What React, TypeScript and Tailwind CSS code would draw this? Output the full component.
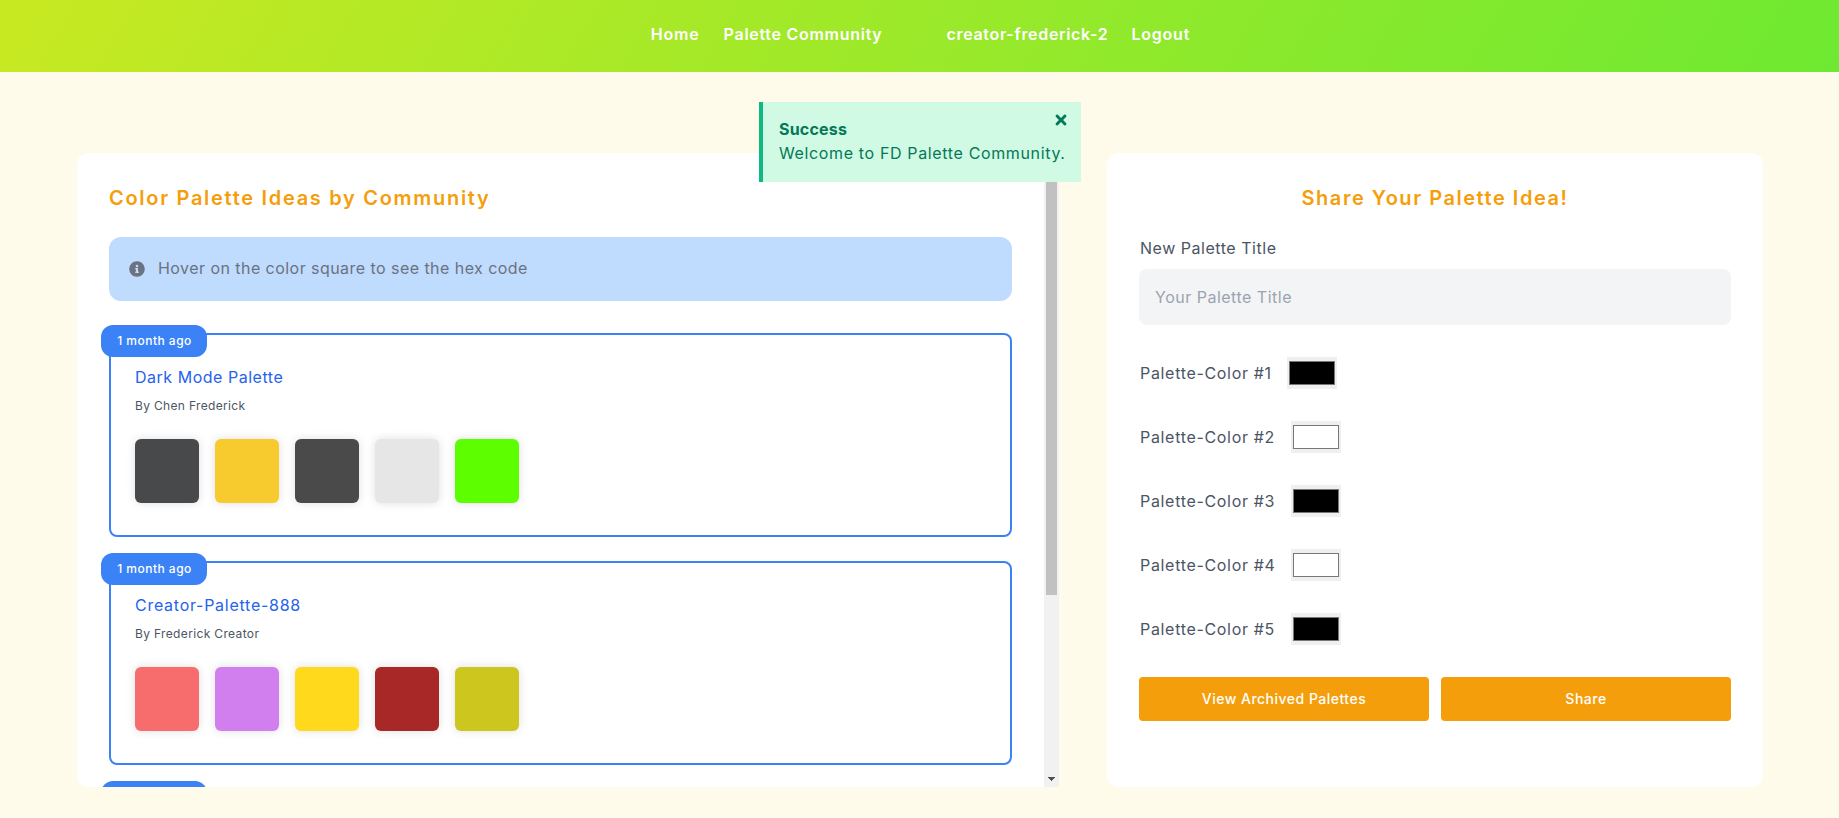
import { FaInfoCircle, FaTimes } from "react-icons/fa";

type Palette = {
  title: string;
  titleClass: string;
  author: string;
  authorClass: string;
  colors: string[];
};

const palettes: Palette[] = [
  {
    title: "Dark Mode Palette",
    titleClass: "tracking-[0.52px]",
    author: "By Chen Frederick",
    authorClass: "tracking-[0.33px]",
    colors: ["bg-[#48494b]", "bg-[#f7cb2d]", "bg-[#4a4a4a]", "bg-[#e6e6e6]", "bg-[#5dff00]"],
  },
  {
    title: "Creator-Palette-888",
    titleClass: "tracking-[0.73px]",
    author: "By Frederick Creator",
    authorClass: "tracking-[0.35px]",
    colors: ["bg-[#f76c6c]", "bg-[#d17fee]", "bg-[#ffd91c]", "bg-[#a82828]", "bg-[#ccc61e]"],
  },
];

const inputs = [
  { label: "Palette-Color #1", value: "#000000", width: "w-[132px]" },
  { label: "Palette-Color #2", value: "#ffffff", width: "w-[136px]" },
  { label: "Palette-Color #3", value: "#000000", width: "w-[136px]" },
  { label: "Palette-Color #4", value: "#ffffff", width: "w-[136px]" },
  { label: "Palette-Color #5", value: "#000000", width: "w-[136px]" },
];

function Header() {
  return (
    <header className="flex h-[72px] items-center justify-center gap-16 bg-[linear-gradient(120deg,#c8e922_0%,#6ee931_100%)] pb-1 pl-0.5 font-semibold text-white">
      <nav className="flex gap-6">
        <a className="tracking-[0.8px]">Home</a>
        <a className="tracking-[0.72px]">Palette Community</a>
      </nav>
      <nav className="flex gap-[23px]">
        <a className="tracking-[0.68px]">creator-frederick-2</a>
        <a className="tracking-[0.8px]">Logout</a>
      </nav>
    </header>
  );
}

function Toast() {
  return (
    <div className="absolute top-[102px] left-[759px] z-10 h-20 w-[322px] border-l-4 border-[#10b981] bg-[#d1fae5] px-4 pt-[15px] text-[#047857]">
      <p className="font-bold tracking-[0.2px]">Success</p>
      <p className="whitespace-nowrap tracking-[0.64px]">Welcome to FD Palette Community.</p>
      <FaTimes className="absolute top-[10px] right-3 size-4" />
    </div>
  );
}

function PaletteCard({ palette }: { palette: Palette }) {
  return (
    <article className="relative h-[204px] shrink-0 rounded-lg border-2 border-[#3b82f6] px-6 pt-[30px]">
      <span className="absolute -top-2.5 -left-2.5 flex h-8 w-[106px] items-center justify-center rounded-xl bg-[#3b82f6] pb-px pl-px text-xs font-medium tracking-[0.48px] text-white">
        1 month ago
      </span>
      <h3 className={"leading-6 text-[#2563eb] " + palette.titleClass}>{palette.title}</h3>
      <p className={"mt-[9px] text-xs text-[#4b5563] " + palette.authorClass}>{palette.author}</p>
      <div className="mt-[25px] flex gap-4">
        {palette.colors.map((color, i) => (
          <div key={i} className={"size-16 rounded-md shadow-[0_0_10px_rgba(0,0,0,0.13)] " + color} />
        ))}
      </div>
    </article>
  );
}

function Community() {
  return (
    <section className="flex h-[634px] overflow-hidden rounded-l-xl bg-white">
      <div className="flex min-w-0 flex-1 flex-col px-8 pt-[31px]">
        <h2 className="text-xl leading-7 font-semibold tracking-[1.7px] text-[#f59e0b]">
          Color Palette Ideas by Community
        </h2>
        <div className="mt-[25px] flex h-16 shrink-0 items-center gap-[13px] rounded-xl bg-[#bfdbfe] px-5 text-[#6b7280]">
          <FaInfoCircle className="size-4" />
          <span className="pb-0.5 tracking-[0.45px]">Hover on the color square to see the hex code</span>
        </div>
        <div className="mt-8 flex flex-col gap-6">
          {palettes.map((p) => (
            <PaletteCard key={p.title} palette={p} />
          ))}
          <article className="relative h-[204px] shrink-0 rounded-lg border-2 border-[#3b82f6]">
            <span className="absolute -top-2.5 -left-2.5 h-8 w-[106px] rounded-xl bg-[#3b82f6]" />
          </article>
        </div>
      </div>
      <div className="flex w-[15px] shrink-0 flex-col items-center justify-between bg-[#f1f1f1] pt-[15px] pb-1.5">
        <div className="h-[427px] w-[11px] bg-[#c1c1c1]" />
        <svg width="7" height="4" viewBox="0 0 7 4" fill="#505050" shapeRendering="crispEdges">
          <path d="M0 0h7v1H6v1H5v1H4v1H3V3H2V2H1V1H0z" />
        </svg>
      </div>
    </section>
  );
}

function ShareForm() {
  return (
    <section className="h-[634px] rounded-xl bg-white px-8 pt-[31px] text-[#4b5563]">
      <h2 className="text-center text-xl leading-7 font-semibold tracking-[1.53px] text-[#f59e0b]">
        Share Your Palette Idea!
      </h2>
      <label className="mt-6 block pl-px leading-6 tracking-[0.53px]">New Palette Title</label>
      <input
        className="mt-[9px] block h-14 w-full rounded-lg bg-[#f3f4f6] px-4 pb-px tracking-[0.5px] placeholder:text-[#9ca3af]"
        placeholder="Your Palette Title"
      />
      <div className="mt-8 flex flex-col gap-8">
        {inputs.map((c) => (
          <div key={c.label} className="flex h-8 items-center gap-4">
            <label className={"pb-px pl-px whitespace-nowrap tracking-[0.68px] " + c.width}>{c.label}</label>
            <input type="color" defaultValue={c.value} className="h-8 w-[50px] bg-[#efefef]" />
          </div>
        ))}
      </div>
      <div className="mt-8 grid grid-cols-2 gap-3 text-sm font-medium text-white">
        <button className="h-11 rounded bg-[#f59e0b] tracking-[0.49px]">View Archived Palettes</button>
        <button className="h-11 rounded bg-[#f59e0b] tracking-[0.5px]">Share</button>
      </div>
    </section>
  );
}

export default function App() {
  return (
    <div className="relative h-[818px] overflow-hidden bg-[#fffbeb] font-['Inter',sans-serif] text-base">
      <Header />
      <Toast />
      <main className="mt-[81px] ml-[77px] grid grid-cols-[982px_656px] gap-12">
        <Community />
        <ShareForm />
      </main>
    </div>
  );
}
